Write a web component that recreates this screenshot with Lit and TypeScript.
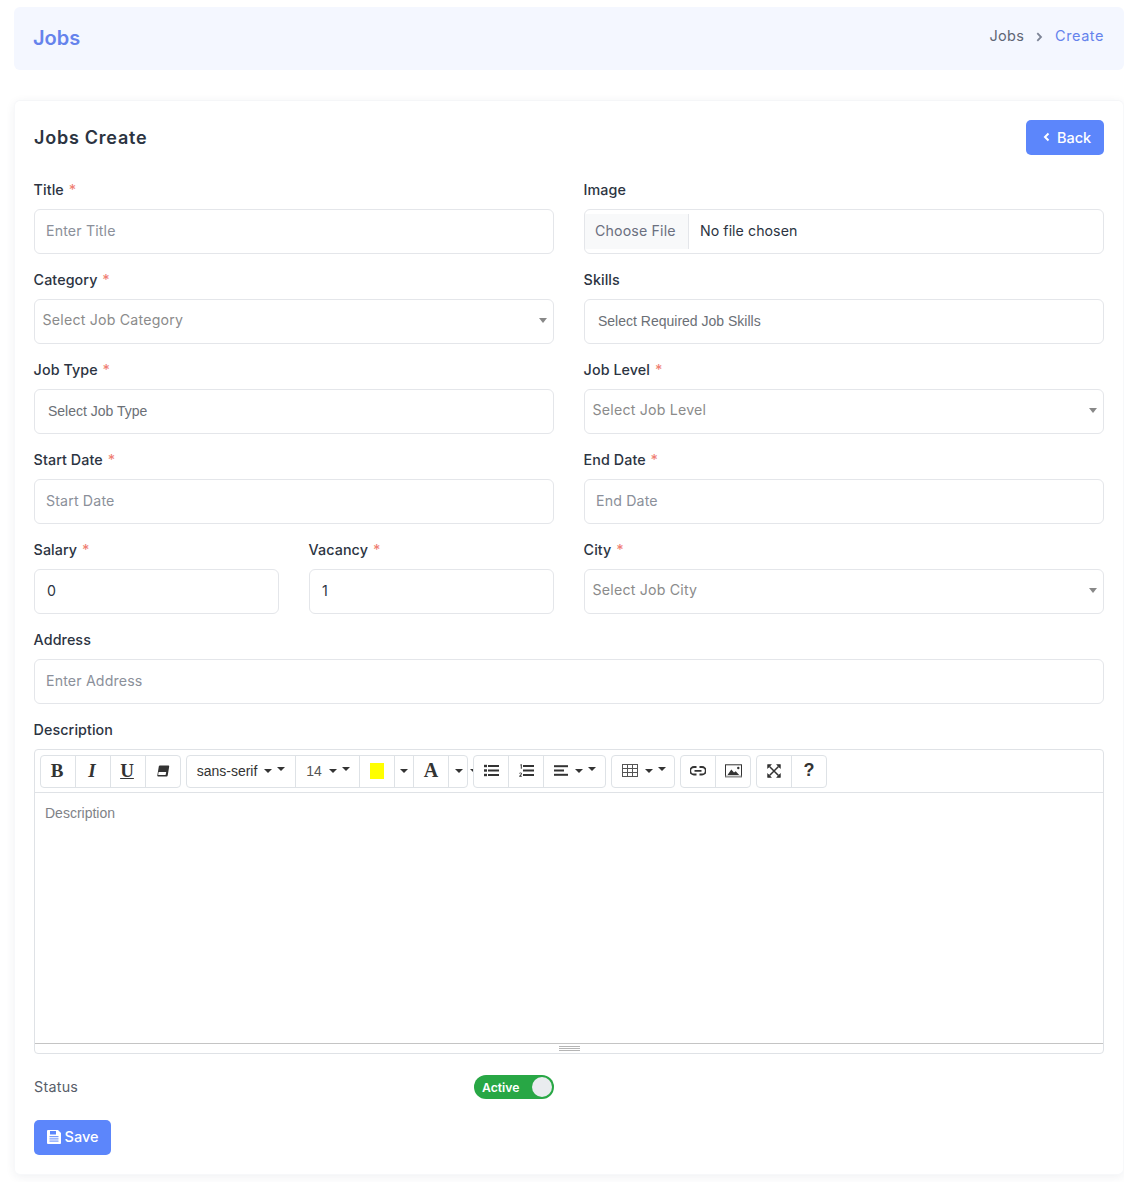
import { LitElement, html, css, svg } from "lit";
import { customElement } from "lit/decorators.js";

const caret = html`<span class="caret"></span>`;
const I = {
  eraser: svg`<svg width="14" height="14" viewBox="0 0 14 14"><path d="M4.200 1.500h8.300c.5 0 .8.4.7.9l-1.500 9.200c-.1.5-.5.9-1 .9H2c-.5 0-.8-.4-.7-.9L2.800 2.500c.1-.6.8-1 1.400-1z" fill="#333"/><path d="M2.600 8h7.600l-.6 3H2.200z" fill="#fff"/></svg>`,
  ul: svg`<svg width="15" height="13" viewBox="0 0 15 13" fill="#333"><rect x="0" y=".8" width="3" height="2.400"/><rect x="0" y="5.300" width="3" height="2.400"/><rect x="0" y="9.800" width="3" height="2.400"/><rect x="4" y="1" width="11" height="2"/><rect x="4" y="5.500" width="11" height="2"/><rect x="4" y="10" width="11" height="2"/></svg>`,
  ol: svg`<svg width="15" height="13" viewBox="0 0 15 13" fill="#333"><rect x="4" y="1" width="11" height="2"/><rect x="4" y="5.500" width="11" height="2"/><rect x="4" y="10" width="11" height="2"/><path d="M1 1 2 .3h.8v4.400H1.800V1.500zM.2 12.700v-.8l1.600-1.600c.4-.5.2-1-.4-1-.4 0-.7.2-1 .5l-.2-.8c.4-.3.8-.5 1.400-.5 1.200 0 1.800 1.200 1 2.100l-1 1.200h1.200v.9z"/></svg>`,
  align: svg`<svg width="14" height="11" viewBox="0 0 14 11" fill="#333"><rect x="0" y=".2" width="14" height="2"/><rect x="0" y="4.500" width="10" height="2"/><rect x="0" y="8.800" width="14" height="2"/></svg>`,
  table: svg`<svg width="16" height="13" viewBox="0 0 16 13" fill="none" stroke="#555" stroke-width="1"><rect x=".5" y=".5" width="15" height="12"/><path d="M.5 4.500h15M.5 8.500h15M5.500.5v12M10.500.5v12"/></svg>`,
  link: svg`<svg width="16" height="10" viewBox="0 0 16 10" fill="none" stroke="#333" stroke-width="1.800"><path d="M6.500 1H4a3.700 3.700 0 0 0 0 7.500h2.500M9.500 1H12a3.700 3.700 0 0 1 0 7.500H9.500M4.500 4.800h7"/></svg>`,
  picture: svg`<svg width="17" height="14" viewBox="0 0 17 14"><rect x=".5" y=".8" width="16" height="12" fill="#fff" stroke="#333"/><path d="M2.500 11 6.300 5.500 9 8.500l1.700-1.300 3.500 3.800z" fill="#333"/><circle cx="13.300" cy="4" r="1.200" fill="#333"/><rect x=".5" y="11.600" width="16" height="1.400" fill="#999"/></svg>`,
  full: svg`<svg width="14" height="14" viewBox="0 0 14 14" fill="none" stroke="#333"><path d="M2.500 2.500l9 9M11.500 2.500l-9 9" stroke-width="1.500"/><path d="M.6 4.400V.6h3.800zM9.600.6h3.800v3.800zM.6 9.600v3.800h3.800zM13.400 9.600v3.800H9.600z" fill="#333" stroke-width=".6"/></svg>`,
  back: svg`<svg width="7" height="10" viewBox="0 0 7 10" fill="none" stroke="#fff" stroke-width="2"><path d="M5.500 1.500 2 5l3.500 3.500"/></svg>`,
  crumb: svg`<svg width="7" height="10" viewBox="0 0 7 10" fill="none" stroke="#7d8496" stroke-width="1.800"><path d="M1.300 1.200 5 5 1.300 8.800"/></svg>`,
  save: svg`<svg width="14" height="14" viewBox="0 0 14 14"><path d="M1 0h10l3 3v10a1 1 0 0 1-1 1H1a1 1 0 0 1-1-1V1a1 1 0 0 1 1-1z" fill="#fff"/><rect x="3" y="1" width="6" height="3.500" fill="#5c86fb"/><path d="M2.500 6.700h9M2.500 8.900h9M2.500 11.100h9" stroke="#5c86fb" stroke-width="1"/></svg>`,
};

@customElement("app-root")
export class AppRoot extends LitElement {
  static styles = css`
    :host { display: block; width: 1124px; background: #fff; font-family: Inter, "Liberation Sans", sans-serif; color: #2c3442; box-sizing: border-box; padding: 7px 0 7px 14px; }
    * { box-sizing: border-box; }
    .head { height: 63px; background: #f4f7ff; border-radius: 6px; display: flex; align-items: center; justify-content: space-between; padding: 0 20px 2px 19px; margin-bottom: 30px; }
    .head h1 { margin: 0; font-size: 20px; font-weight: 600; color: #6583ec; line-height: 24px; }
    .crumbs { display: flex; align-items: center; font-size: 14.500px; color: #5f6675; margin-top: -4px; letter-spacing: .25px; }
    .crumbs svg { margin: 2px 12px 0 12px; }
    .crumbs b { font-weight: 400; color: #6583ec; letter-spacing: .55px; }
    .card { background: #fff; border-radius: 6px; border: 1px solid #f7f8fa; border-top-color: #f5f6f8; box-shadow: 0 2px 10px rgba(40, 50, 80, .07); padding: 19px; height: 1075px; }
    .top { display: flex; justify-content: space-between; align-items: center; height: 35px; margin-bottom: 23px; }
    .top h2 { margin: 0; font-size: 18px; font-weight: 600; letter-spacing: .75px; color: #2c3442; }
    .btn { display: inline-flex; align-items: center; justify-content: center; height: 35px; background: #5c86fb; color: #fff; border-radius: 5px; font-size: 14.500px; font-weight: 500; padding-bottom: 1px; }
    .back { width: 78px; gap: 7px; padding-left: 4px; }
    .save { width: 77px; gap: 4px; padding-bottom: 2px; }
    .save svg { margin-top: 1px; }
    .grid { display: grid; grid-template-columns: repeat(12, 1fr); column-gap: 30px; }
    .g { grid-column: span 6; height: 90px; min-width: 0; }
    .q { grid-column: span 3; height: 90px; min-width: 0; }
    .full { grid-column: span 12; }
    .desc { grid-column: span 12; }
    label { display: block; height: 31px; padding-top: 2px; font-size: 14.300px; font-weight: 500; line-height: 20px; letter-spacing: .08px; color: #2c3442; margin-left: -.4px; }
    label i { font-style: normal; color: #ef7f74; margin-left: 1px; }
    .f { height: 45px; border: 1px solid #e4e6ea; border-radius: 6px; background: #fff; display: flex; align-items: center; padding: 0 12px 2px 11px; font-size: 14.200px; color: #8b909a; letter-spacing: .15px; position: relative; white-space: nowrap; }
    .f.val { color: #2c3442; padding-left: 12px; }
    .f.sel { padding: 0 8px 4px 7.500px; color: #8b8b8b; letter-spacing: .2px; }
    .f.sel::after { content: ""; position: absolute; right: 6px; top: 18px; border: 4px solid transparent; border-top: 5px solid #888; border-bottom: 0; }
    .f.mul { font-family: "Liberation Sans", sans-serif; font-size: 14px; color: #6b6f76; padding-left: 13px; letter-spacing: 0; }
    .f.file { padding: 0 0 3px; color: #2c3442; letter-spacing: .05px; }
    .choose { width: 104px; height: 35px; padding-left: 10px; margin: 3px 11px 0 0; background: #f8f9fa; border-right: 1px solid #e4e6ea; color: #6b7080; display: flex; align-items: center; padding-bottom: 3px; letter-spacing: .15px; flex: none; }
    .editor { height: 305px; border: 1px solid #dfe2e6; border-radius: 4px; display: flex; flex-direction: column; font-family: "Liberation Sans", sans-serif; }
    .tb { height: 43px; border-bottom: 1px solid #dfe2e6; padding: 5px 0 0 5px; display: flex; }
    .grp { display: flex; height: 33px; border: 1px solid #dee2e6; border-radius: 4px; margin-right: 5px; background: #fff; }
    .grp.tight { margin-right: 0; }
    .b { height: 100%; width: 35px; display: flex; align-items: center; justify-content: center; border-right: 1px solid #dee2e6; color: #333; font-size: 14px; gap: 7px; flex: none; padding-bottom: 2px; }
    .b:last-child { border-right: 0; margin-right: -1px; }
    .b.x { font-family: "Liberation Serif", serif; font-size: 19px; font-weight: 700; padding-right: 2px; }
    .b.x.a { font-size: 20px; padding-right: 0; }
    .b.n { color: #555; padding-left: 1px; }
    .b.h { font-size: 18px; font-weight: 700; padding-right: 1px; }
    .b.e { padding-right: 2px; }
    .caret { display: inline-block; border: 4px solid transparent; border-top: 4px solid #333; border-bottom: 0; }
    .dd .caret + .caret { margin-left: -2px; margin-top: -3px; }
    .stray { width: 5px; height: 33px; overflow: hidden; display: flex; align-items: center; padding-left: 2px; flex: none; padding-bottom: 2px; }
    .swatch { width: 14px; height: 16px; background: #ff0; }
    .w109 { width: 109px; } .w64 { width: 64px; } .w63 { width: 63px; } .w62 { width: 62px; } .w19 { width: 19px; }
    .area { flex: 1; padding: 10px; font-size: 14px; line-height: 20px; color: #7f8287; }
    .bar { height: 10px; border-top: 1px solid #c4c4c4; display: flex; justify-content: center; align-items: center; border-radius: 0 0 4px 4px; }
    .grip { width: 21px; height: 5px; border-top: 1px solid #b5b5b5; border-bottom: 1px solid #b5b5b5; margin-left: 1px; }
    .grip::after { content: ""; display: block; height: 1px; margin-top: 1px; background: #b5b5b5; }
    .status { margin-top: 21px; height: 24px; width: 520px; display: flex; justify-content: space-between; align-items: center; font-size: 14.300px; color: #575d69; letter-spacing: .25px; }
    .status > span { margin-top: -2px; }
    .toggle { width: 80px; height: 24px; background: #28a745; border-radius: 12px; position: relative; display: flex; align-items: center; padding-left: 8px; color: #fff; font-size: 12.200px; font-weight: 600; letter-spacing: 0; }
    .knob { position: absolute; right: 2px; top: 2px; width: 20px; height: 20px; border-radius: 50%; background: #e9ecef; }
    .foot { margin-top: 21px; }
  `;

  private field(name: string, req: boolean, body: unknown, cls = "g") {
    return html`<div class=${cls}><label>${name}${req ? html` <i>*</i>` : ""}</label>${body}</div>`;
  }

  render() {
    return html`
      <div class="head">
        <h1>Jobs</h1>
        <div class="crumbs"><span>Jobs</span>${I.crumb}<b>Create</b></div>
      </div>
      <div class="card">
        <div class="top">
          <h2>Jobs Create</h2>
          <span class="btn back">${I.back}Back</span>
        </div>
        <div class="grid">
          ${this.field("Title", true, html`<div class="f">Enter Title</div>`)}
          ${this.field("Image", false, html`<div class="f file"><span class="choose">Choose File</span>No file chosen</div>`)}
          ${this.field("Category", true, html`<div class="f sel">Select Job Category</div>`)}
          ${this.field("Skills", false, html`<div class="f mul">Select Required Job Skills</div>`)}
          ${this.field("Job Type", true, html`<div class="f mul">Select Job Type</div>`)}
          ${this.field("Job Level", true, html`<div class="f sel">Select Job Level</div>`)}
          ${this.field("Start Date", true, html`<div class="f">Start Date</div>`)}
          ${this.field("End Date", true, html`<div class="f">End Date</div>`)}
          ${this.field("Salary", true, html`<div class="f val">0</div>`, "q")}
          ${this.field("Vacancy", true, html`<div class="f val">1</div>`, "q")}
          ${this.field("City", true, html`<div class="f sel">Select Job City</div>`)}
          ${this.field("Address", false, html`<div class="f">Enter Address</div>`, "g full")}
          <div class="desc">
            <label>Description</label>
            <div class="editor">
              <div class="tb">
                <div class="grp">
                  <div class="b x">B</div>
                  <div class="b x"><em>I</em></div>
                  <div class="b x"><u>U</u></div>
                  <div class="b e">${I.eraser}</div>
                </div>
                <div class="grp tight">
                  <div class="b dd w109">sans-serif ${caret}${caret}</div>
                  <div class="b dd n w64">14 ${caret}${caret}</div>
                  <div class="b"><span class="swatch"></span></div>
                  <div class="b w19">${caret}</div>
                  <div class="b x a">A</div>
                  <div class="b w19">${caret}</div>
                </div>
                <div class="stray">${caret}</div>
                <div class="grp">
                  <div class="b">${I.ul}</div>
                  <div class="b">${I.ol}</div>
                  <div class="b dd w62">${I.align}${caret}${caret}</div>
                </div>
                <div class="grp">
                  <div class="b dd w63">${I.table}${caret}${caret}</div>
                </div>
                <div class="grp">
                  <div class="b">${I.link}</div>
                  <div class="b">${I.picture}</div>
                </div>
                <div class="grp">
                  <div class="b">${I.full}</div>
                  <div class="b h">?</div>
                </div>
              </div>
              <div class="area">Description</div>
              <div class="bar"><div class="grip"></div></div>
            </div>
          </div>
        </div>
        <div class="status">
          <span>Status</span>
          <div class="toggle">Active<span class="knob"></span></div>
        </div>
        <div class="foot"><span class="btn save">${I.save}Save</span></div>
      </div>
    `;
  }
}
